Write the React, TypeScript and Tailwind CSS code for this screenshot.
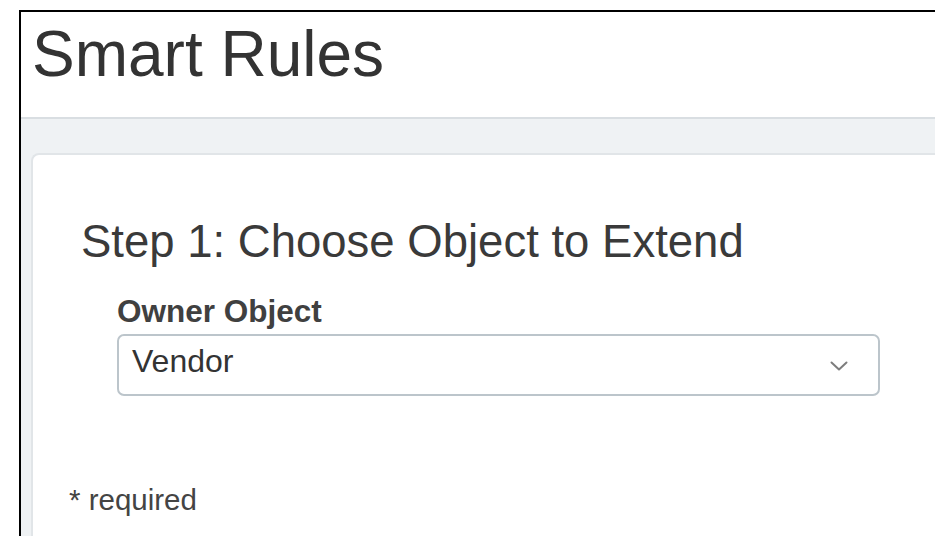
const font = "font-['Liberation_Sans',Arial,sans-serif]";

function Chevron() {
  return (
    <svg width="18" height="10" viewBox="0 0 18 10" fill="none" className="mr-[30px] mt-[2px]">
      <polyline points="1.5,1.5 9,8.5 16.5,1.5" stroke="#7d7d7d" strokeWidth="2" strokeLinecap="round" strokeLinejoin="round" />
    </svg>
  );
}

export default function App() {
  return (
    <div className={`w-[935px] h-[536px] overflow-hidden bg-white pl-[19px] pt-[10px] ${font}`}>
      <div className="h-full flex flex-col border-l-2 border-t-2 border-black">
        <header className="h-[107px] shrink-0 pl-[11px] pt-[10px] border-b-2 border-[#d9dee2]">
          <h1 className="text-[64px] leading-none text-[#333333]">Smart Rules</h1>
        </header>

        <div className="flex-1 flex flex-col bg-[#eff2f4] pl-[10px] pt-[34px]">
          <div className="flex-1 bg-white border-2 border-r-0 border-b-0 border-[#e1e5e8] rounded-tl-lg">
            <h2 className="ml-[48px] mt-[64px] text-[45.5px] leading-none text-[#3a3a3a]">
              Step 1: Choose Object to Extend
            </h2>

            <div className="ml-[84px] mt-[31px]">
              <label className="block text-[31.5px] leading-none font-bold text-[#404040]">Owner Object</label>
              <div className="mt-[7px] w-[763px] h-[62px] flex justify-between items-start border-2 border-[#bcc5cb] rounded-[7px] bg-white">
                <span className="pl-[13px] pt-[9px] text-[32px] leading-none text-[#333333]">Vendor</span>
                <div className="self-center">
                  <Chevron />
                </div>
              </div>
            </div>

            <p className="ml-[36px] mt-[89px] text-[29.5px] leading-none text-[#444444]">* required</p>
          </div>
        </div>
      </div>
    </div>
  );
}
